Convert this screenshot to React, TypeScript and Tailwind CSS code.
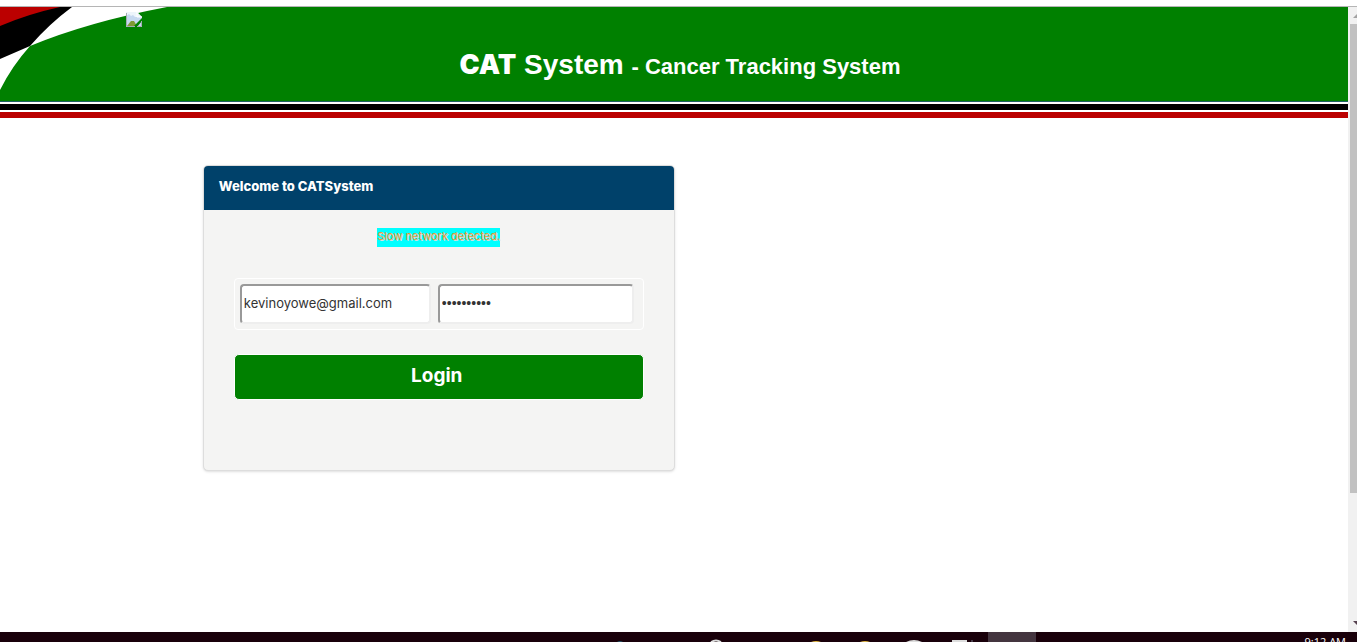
function BannerFlag() {
  return (
    <svg className="absolute left-0 top-0" width="170" height="94" viewBox="0 0 170 94" aria-hidden="true">
      <path d="M0 0H167Q88 15 30 39Q12 59 0 83Z" fill="#fff" />
      <path d="M0 0H72Q49 17 30 39L0 52Z" fill="#000" />
      <path d="M0 0H60Q28 7 0 19Z" fill="#bb0000" />
    </svg>
  );
}

function BrokenImage() {
  return (
    <svg className="relative ml-[126px] block" width="16" height="16" viewBox="0 0 16 16" role="img" aria-label="Logo">
      <path d="M0 0H11L16 5V15H0Z" fill="#c6d9f0" />
      <path d="M0 0H11L16 5H9L7 3L5 4L3 2L0 4Z" fill="#eef5fb" />
      <path d="M1 14L5 9H8L11 14Z" fill="#7f9a35" />
      <path d="M7 15L16 6V9L11 15Z" fill="#008000" />
      <path d="M11 0V5H16" fill="none" stroke="#fff" />
      <path d="M.5 1V14.5H9M11 14.5H15.5V9" fill="none" stroke="#a4abb3" />
    </svg>
  );
}

function Banner() {
  return (
    <header>
      <div className="relative h-[95px] border-b border-[#1c6262] bg-[#008000] pt-[5px]">
        <BannerFlag />
        <BrokenImage />
        <h1 className="ml-3 mt-5 text-center text-[28px] leading-[34px] font-bold text-white">
          <span className="font-['Inter',sans-serif] text-[27px] font-black">CAT</span> System{" "}
          <span className="text-[22px]">- Cancer Tracking System</span>
        </h1>
      </div>
      <div className="mt-0.5 h-1.5 bg-black" />
      <div className="mt-0.5 h-1.5 bg-[#bb0000]" />
    </header>
  );
}

const fieldClass =
  "h-10 min-w-0 rounded-[4px] border-2 border-t-[#999] border-l-[#999] border-r-[#eee] border-b-[#eee] bg-white px-0.5 text-[#333] outline-none";

function LoginCard() {
  return (
    <section className="ml-[15.05%] mt-[47px] w-[35%] min-w-[300px] overflow-hidden rounded-[5px] border border-[#dddddd] bg-[#f4f4f3] pb-[70px] font-['Inter',sans-serif] shadow-sm">
      <h2 className="h-11 bg-[#00416a] px-[15px] text-[13px] leading-[41px] font-extrabold text-white">
        Welcome to CATSystem
      </h2>
      <div className="mt-[18px] flex justify-center">
        <span className="h-[19px] bg-[#00ffff] text-[11px] leading-[17px] text-[#ed9b35] [text-shadow:1px_1px_0_#ddd]">
          Slow network detected.
        </span>
      </div>
      <form className="px-[30px]" onSubmit={(e) => e.preventDefault()}>
        <div className="mt-[31px] flex gap-[7px] rounded-[4px] border border-white py-[5px] pl-[5px] pr-[9px]">
          <input aria-label="Email" type="email" defaultValue="kevinoyowe@gmail.com" className={`${fieldClass} flex-[191] pb-0.5 text-[13px]`} />
          <input aria-label="Password" type="password" defaultValue="password12" className={`${fieldClass} flex-[196] pb-0.5 font-['Liberation_Sans',sans-serif] text-[14px]`} />
        </div>
        <button type="submit" className="mt-6 block h-[46px] w-full rounded-[5px] border border-white bg-[#008000] pb-0.5 pr-1 text-[19px] leading-6 font-bold text-white">
          Login
        </button>
      </form>
    </section>
  );
}

function ScrollRail() {
  return (
    <div className="flex w-[9px] flex-col bg-[#f1f1f1] pl-0.5" aria-hidden="true">
      <svg width="7" height="17" viewBox="0 0 7 17">
        <path d="M3 11L7 7V11Z" fill="#a3a3a3" />
      </svg>
      <div className="h-3/4 bg-[#c1c1c1]" />
      <svg className="mt-auto" width="7" height="17" viewBox="0 0 7 17">
        <path d="M3 6H7V10Z" fill="#56414f" />
      </svg>
    </div>
  );
}

function Taskbar() {
  return (
    <footer className="relative flex h-2.5 items-start overflow-hidden bg-[#19000a]">
      <svg className="absolute left-0 top-0" width="1040" height="10" viewBox="0 0 1040 10" aria-hidden="true">
        <rect x="988" width="48" height="10" fill="#44353f" />
        <path d="M617 10Q620 8 623 10Z" fill="#255367" />
        <path d="M711 10Q716 7 721 10" fill="none" stroke="#ddd" strokeWidth="2" />
        <path d="M811 10Q816 8 821 10Z" fill="#e2b947" />
        <path d="M860 10Q865 8 870 10Z" fill="#e2b947" />
        <path d="M906 10Q914 6 922 10Z" fill="#ddd" />
        <path d="M952 8H967V10H952Z" fill="#ddd" />
        <path d="M972 8V10" stroke="#777386" />
      </svg>
      <time className="ml-auto mr-[11px] mt-0.5 font-['Open_Sans',sans-serif] text-[11px] leading-4 text-white">9:12 AM</time>
    </footer>
  );
}

export default function App() {
  return (
    <div className="flex h-screen flex-col bg-white font-['Liberation_Sans',sans-serif]">
      <div className="h-[7px] border-b border-[#b5b5b5]" />
      <div className="flex min-h-0 flex-1">
        <main className="min-w-0 flex-1 overflow-hidden">
          <Banner />
          <LoginCard />
        </main>
        <ScrollRail />
      </div>
      <Taskbar />
    </div>
  );
}
